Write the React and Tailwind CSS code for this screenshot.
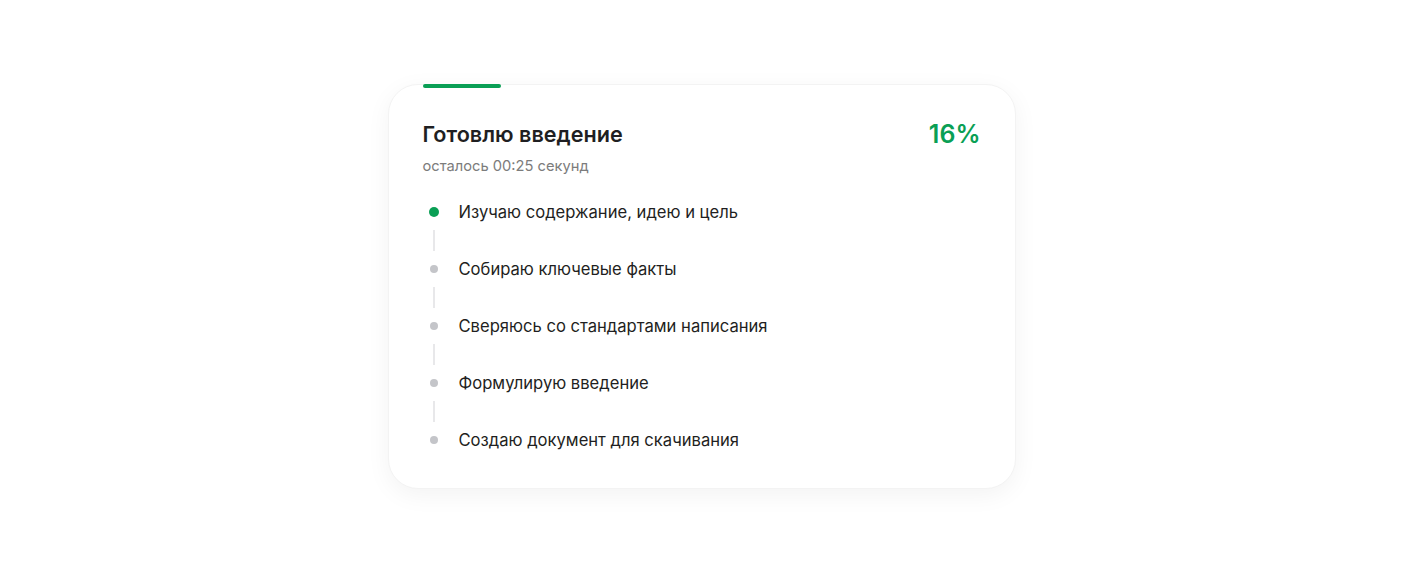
import React from 'react';

const steps = [
  { label: 'Изучаю содержание, идею и цель', active: true },
  { label: 'Собираю ключевые факты' },
  { label: 'Сверяюсь со стандартами написания' },
  { label: 'Формулирую введение' },
  { label: 'Создаю документ для скачивания' },
];

const App = () => {
  return (
    <div
      className="min-h-[584px] w-full bg-white flex justify-center pt-[84px]"
      style={{ fontFamily: 'Inter, "Noto Sans", sans-serif' }}
    >
      <div className="w-[628px] h-[405px] bg-white rounded-[30px] border border-[#f3f3f3] shadow-[0_6px_24px_rgba(0,0,0,0.05)] pl-[34px] pr-[34px] pb-[38px]">
        {/* progress bar */}
        <div className="h-[4px] w-[78px] -mt-px rounded-full bg-[#0a9f55]" />

        <div className="flex justify-between items-start pt-[32px]">
          <div>
            <h2 className="text-[21.6px] leading-[28px] font-semibold text-[#1f1f22]">Готовлю введение</h2>
            <p className="mt-2 text-[14.7px] leading-[20px] text-[#7c7c7c]">осталось 00:25 секунд</p>
          </div>
          <span className="text-[25px] leading-[28px] font-semibold text-[#0a9f55]">16%</span>
        </div>

        <ul className="mt-6">
          {steps.map((step, i) => (
            <li key={i}>
              {i > 0 && (
                <div className="w-[22px] flex justify-center py-[6px]">
                  <div className="w-[2px] h-[21px] bg-[#e8e8ea]" />
                </div>
              )}
              <div className="flex items-center h-[24px]">
                <div className="w-[22px] flex justify-center">
                  {step.active ? (
                    <span className="w-[10px] h-[10px] rounded-full bg-[#0a9f55]" />
                  ) : (
                    <span className="w-[8px] h-[8px] rounded-full bg-[#c4c5c9]" />
                  )}
                </div>
                <span className="ml-[14px] text-[16.6px] leading-[24px] text-[#1f1f22]">{step.label}</span>
              </div>
            </li>
          ))}
        </ul>
      </div>
    </div>
  );
};

export default App;
